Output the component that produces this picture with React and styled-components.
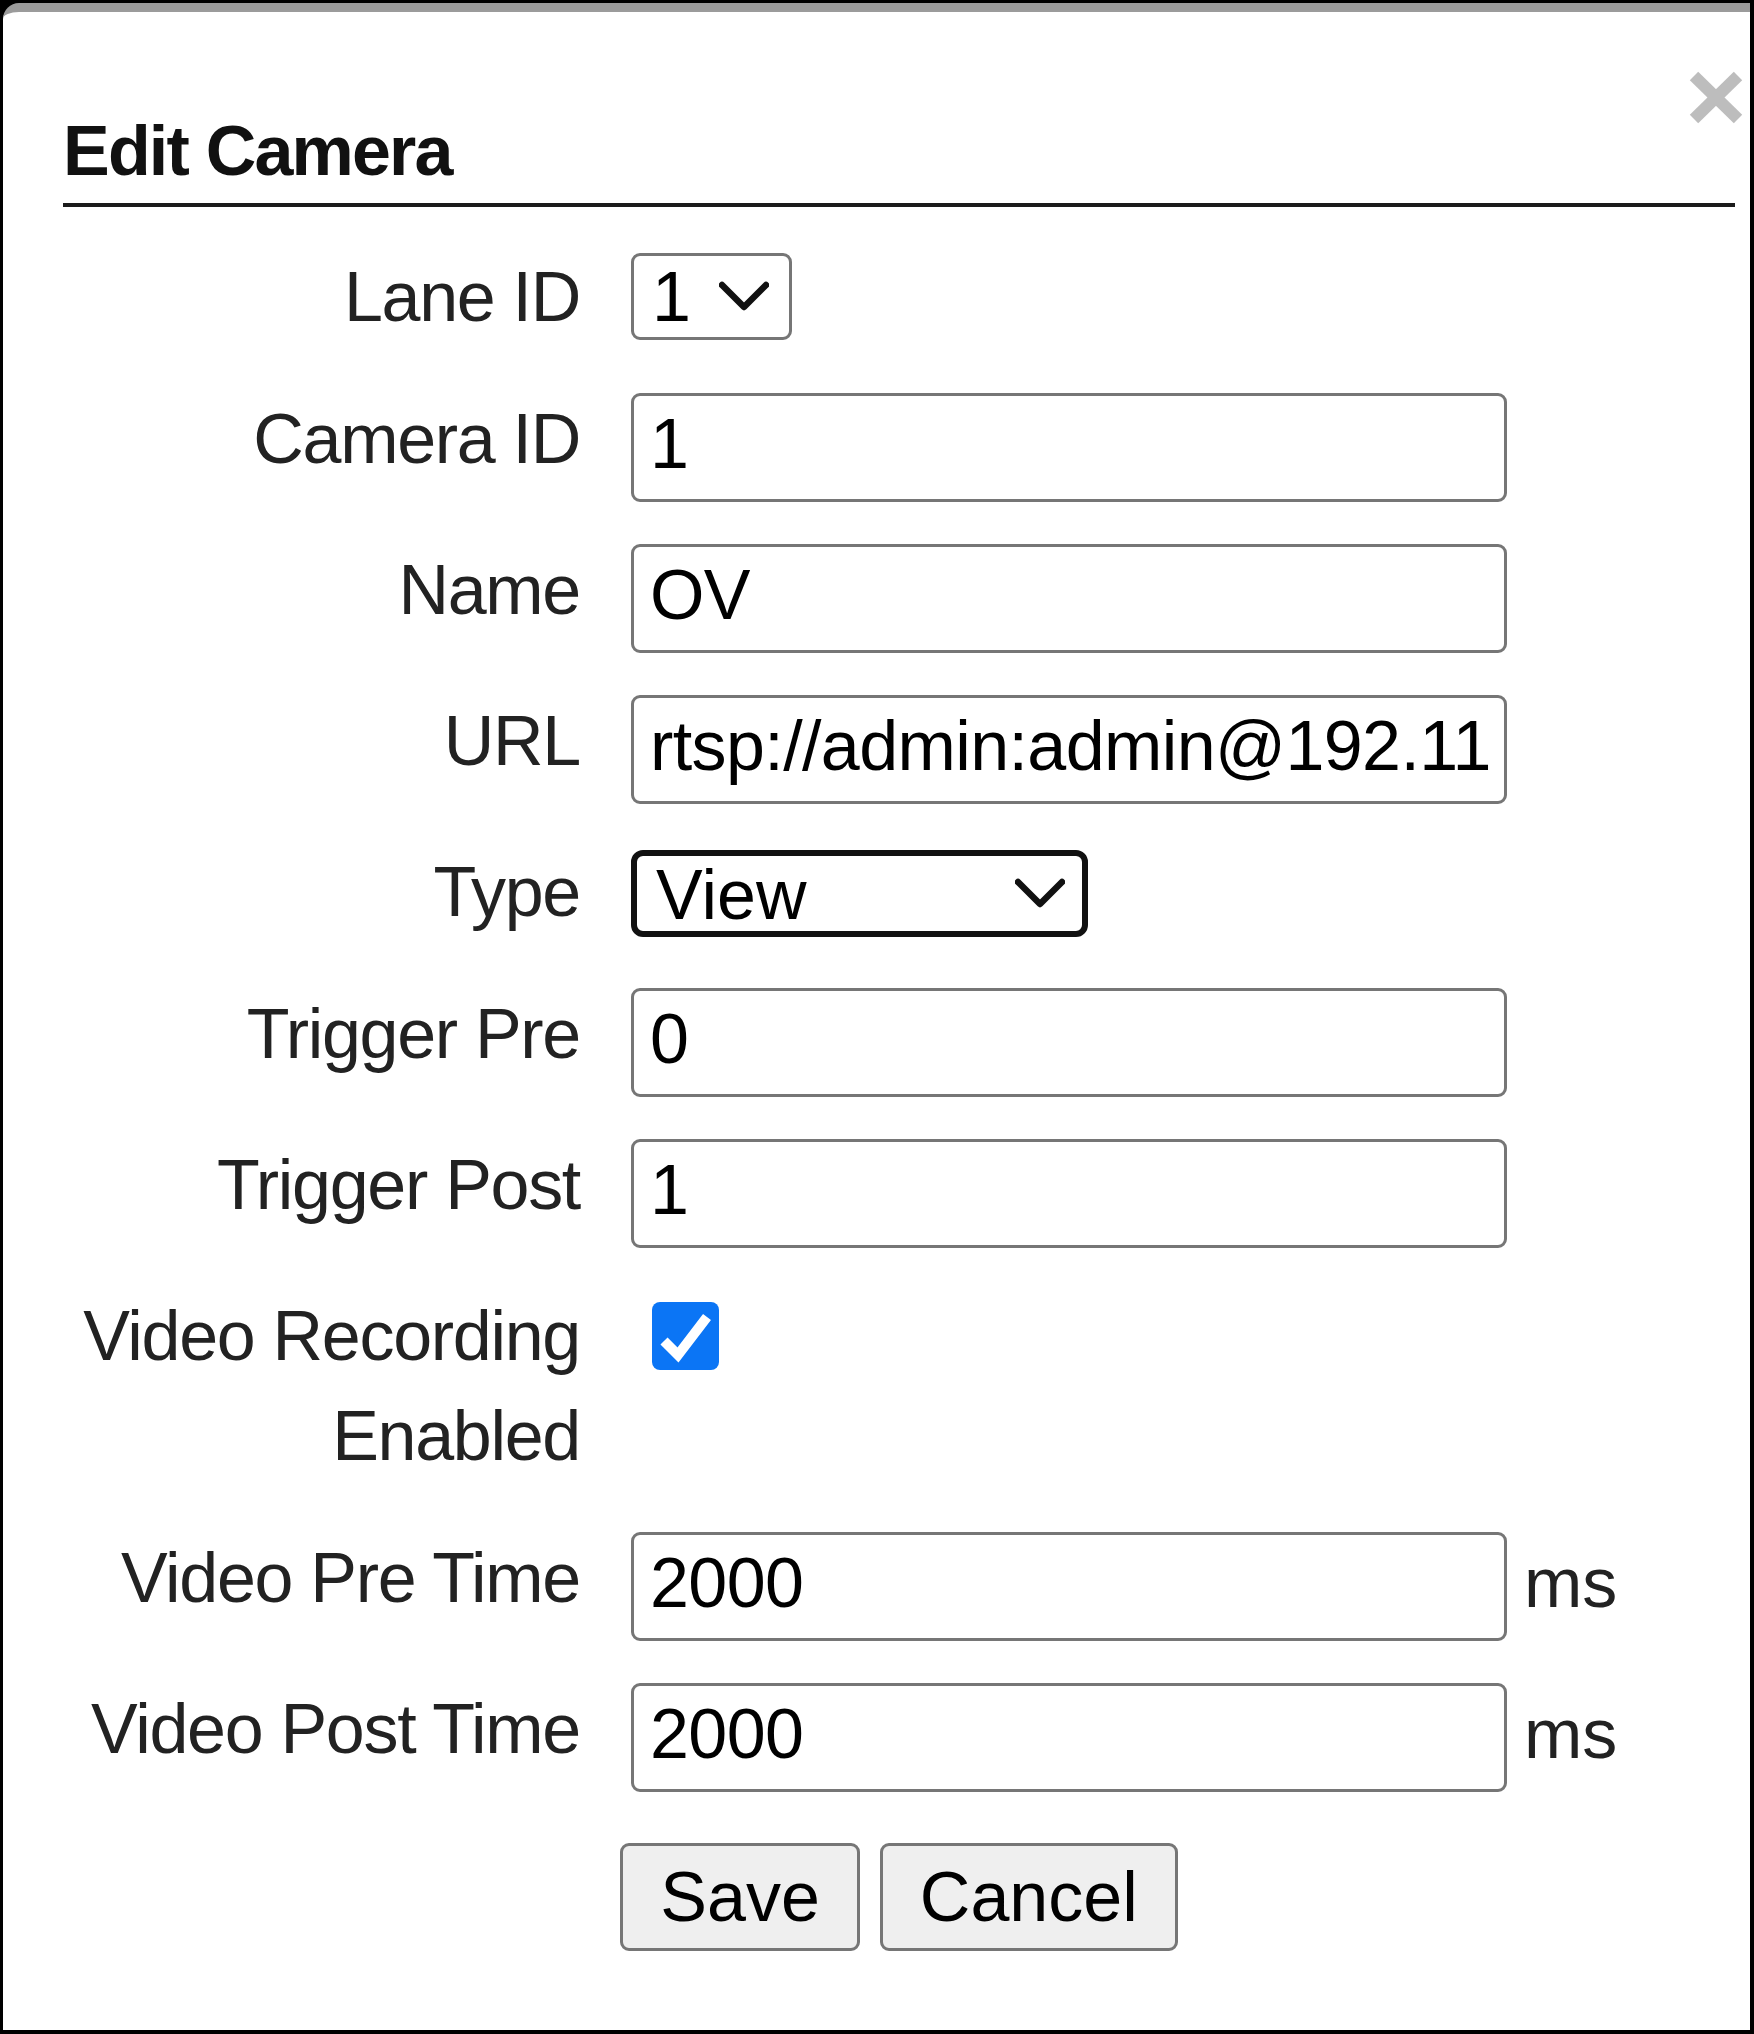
import React from "react";
import styled, { createGlobalStyle } from "styled-components";

const Global = createGlobalStyle`
  html, body { margin: 0; padding: 0; background: #000; }
  * { box-sizing: border-box; }
  body { font-family: "Liberation Sans", Arial, sans-serif; }
`;

const Frame = styled.div`
  width: 1754px;
  height: 2034px;
  padding: 3px 4px 4px 3px;
  display: flex;
  background: #000;
`;

const Modal = styled.div`
  position: relative;
  flex: 1;
  background: #fff;
  border-top: 9px solid #9b9b9b;
  border-top-left-radius: 16px;
  padding: 101px 15px 0 60px;
  font-family: "Liberation Sans", Arial, sans-serif;
`;

const CloseButton = styled.button`
  position: absolute;
  top: 58px;
  right: 6px;
  width: 56px;
  height: 55px;
  padding: 0;
  border: 0;
  background: transparent;
  display: block;
  cursor: pointer;
`;

const Title = styled.h4`
  margin: 0;
  font-size: 70px;
  line-height: 77px;
  font-weight: bold;
  letter-spacing: -1.8px;
  color: #111;
  padding-bottom: 13px;
  border-bottom: 4px solid #1b1b1b;
`;

const Form = styled.form`
  margin-top: 44px;
  display: flex;
  flex-direction: column;
  gap: 42px;
`;

const Row = styled.div`
  display: grid;
  grid-template-columns: 517px 1fr;
  column-gap: 51px;
  align-items: start;
`;

const Label = styled.label`
  text-align: right;
  font-size: 70px;
  line-height: 100px;
  letter-spacing: -1.3px;
  color: #222;
  margin: -4px 0 4px;
`;

const Control = styled.div`
  display: flex;
  align-items: baseline;
  gap: 17px;
  min-height: ${(p) => p.$minH || 0}px;
  padding-top: ${(p) => p.$padTop || 0}px;
  padding-left: ${(p) => p.$padLeft || 0}px;
`;

const TextInput = styled.input`
  width: 876px;
  height: 109px;
  border: 3px solid #767676;
  border-radius: 9px;
  padding: 0 15px 8px 16px;
  font-family: "Liberation Sans", Arial, sans-serif;
  font-size: 70px;
  letter-spacing: -0.6px;
  color: #000;
  background: #fff;
  outline: none;
`;

const Unit = styled.span`
  font-size: 70px;
  color: #222;
`;

const SelectWrap = styled.div`
  position: relative;
  display: inline-block;
  width: ${(p) => p.$width}px;
  height: 87px;
`;

const Select = styled.select`
  appearance: none;
  -webkit-appearance: none;
  width: 100%;
  height: 100%;
  border: ${(p) => (p.$focused ? "6px solid #111" : "3px solid #767676")};
  border-radius: ${(p) => (p.$focused ? "12px" : "9px")};
  padding: 0 80px 0 ${(p) => (p.$focused ? 19 : 18)}px;
  font-family: "Liberation Sans", Arial, sans-serif;
  font-size: 70px;
  color: #000;
  background: #fff;
  outline: none;
`;

const Chevron = styled.svg`
  position: absolute;
  right: 23px;
  top: 50%;
  transform: translateY(-50%);
  pointer-events: none;
`;

const CheckBox = styled.span`
  display: inline-flex;
  align-items: center;
  justify-content: center;
  width: 67px;
  height: 68px;
  border-radius: 8px;
  background: #0b75f5;
`;

const Buttons = styled.div`
  margin-top: 51px;
  display: flex;
  justify-content: center;
  gap: 20px;
`;

const Button = styled.button`
  height: 108px;
  padding: 0 37px;
  border: 3px solid #767676;
  border-radius: 9px;
  background: #efefef;
  font-family: "Liberation Sans", Arial, sans-serif;
  font-size: 70px;
  color: #000;
`;

function ChevronIcon() {
  return (
    <Chevron width="50" height="32" viewBox="0 0 50 32">
      <polyline
        points="3,4 25,26 47,4"
        fill="none"
        stroke="#111"
        strokeWidth="6.5"
        strokeLinecap="round"
        strokeLinejoin="round"
      />
    </Chevron>
  );
}

function SelectField({ width, value, options, focused }) {
  return (
    <SelectWrap $width={width}>
      <Select defaultValue={value} $focused={focused}>
        {options.map((o) => (
          <option key={o}>{o}</option>
        ))}
      </Select>
      <ChevronIcon />
    </SelectWrap>
  );
}

function InputRow({ label, value, unit }) {
  return (
    <Row>
      <Label>{label}</Label>
      <Control>
        <TextInput defaultValue={value} />
        {unit && <Unit>{unit}</Unit>}
      </Control>
    </Row>
  );
}

export default function App() {
  return (
    <>
      <Global />
      <Frame>
        <Modal>
          <CloseButton aria-label="Close">
            <svg width="56" height="55" viewBox="0 0 56 55">
              <line x1="6" y1="6" x2="50" y2="49" stroke="#bdbdbd" strokeWidth="12" />
              <line x1="50" y1="6" x2="6" y2="49" stroke="#bdbdbd" strokeWidth="12" />
            </svg>
          </CloseButton>
          <Title>Edit Camera</Title>
          <Form onSubmit={(e) => e.preventDefault()}>
            <Row>
              <Label>Lane ID</Label>
              <Control $minH={100} $padTop={2}>
                <SelectField width={161} value="1" options={["1", "2", "3", "4"]} />
              </Control>
            </Row>
            <InputRow label="Camera ID" value="1" />
            <InputRow label="Name" value="OV" />
            <InputRow label="URL" value="rtsp://admin:admin@192.118.1.64:554/stream1" />
            <Row>
              <Label>Type</Label>
              <Control $minH={100} $padTop={4}>
                <SelectField width={457} value="View" options={["View", "Plate", "Overview"]} focused />
              </Control>
            </Row>
            <InputRow label="Trigger Pre" value="0" />
            <InputRow label="Trigger Post" value="1" />
            <Row>
              <Label>Video Recording Enabled</Label>
              <Control $padTop={12} $padLeft={21}>
                <CheckBox role="checkbox" aria-checked="true">
                  <svg width="67" height="68" viewBox="0 0 67 68">
                    <polyline
                      points="12,39 26,53 55,15"
                      fill="none"
                      stroke="#fff"
                      strokeWidth="10"
                      strokeLinejoin="miter"
                    />
                  </svg>
                </CheckBox>
              </Control>
            </Row>
            <InputRow label="Video Pre Time" value="2000" unit="ms" />
            <InputRow label="Video Post Time" value="2000" unit="ms" />
          </Form>
          <Buttons>
            <Button type="button">Save</Button>
            <Button type="button">Cancel</Button>
          </Buttons>
        </Modal>
      </Frame>
    </>
  );
}
